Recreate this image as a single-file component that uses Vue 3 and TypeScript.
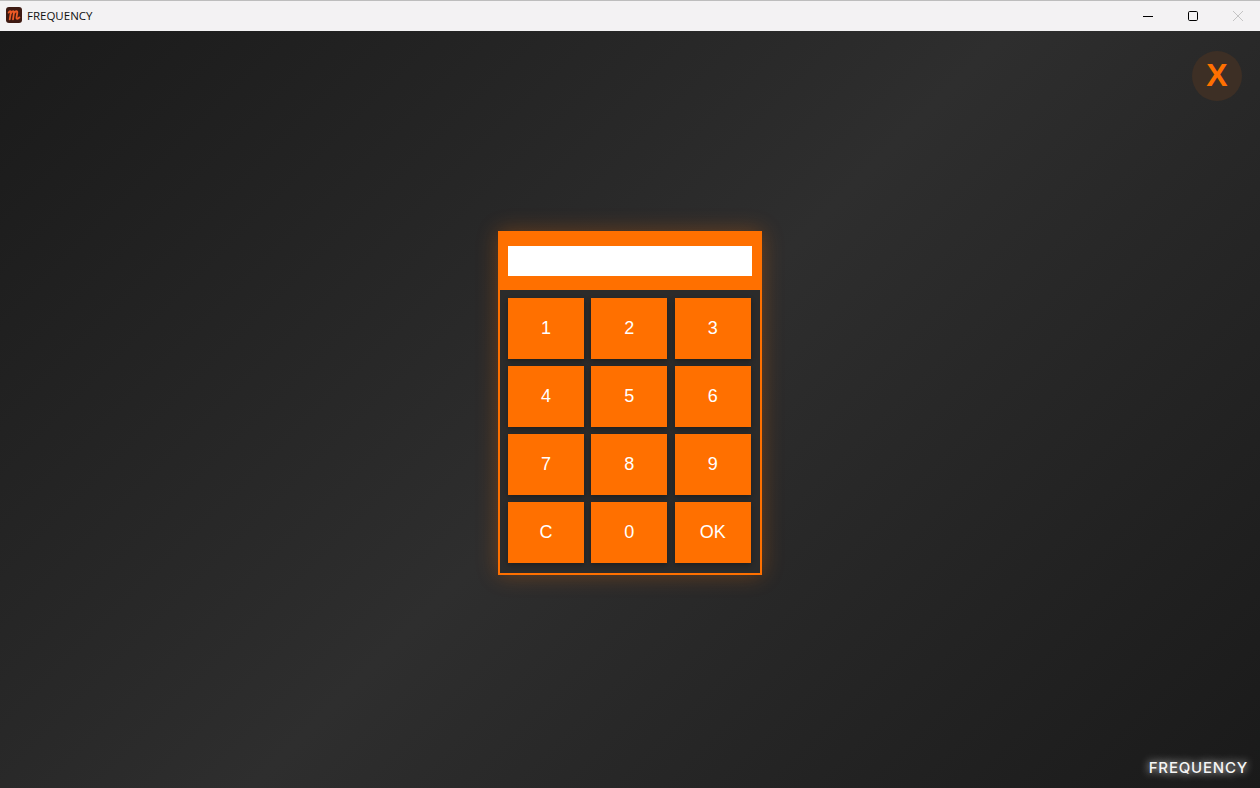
<script setup lang="ts">
const keys: string[] = ['1','2','3','4','5','6','7','8','9','C','0','OK']
</script>

<template>
  <div class="window">
    <header class="titlebar">
      <div class="app-title">
        <svg class="app-icon" width="16" height="16" viewBox="0 0 16 16">
          <rect x="0" y="0" width="16" height="16" rx="3" fill="#3d1a12" />
          <path d="M2.6 5.6C3.6 3.9 5 3.8 4.9 5.2L3.7 12.4M5.2 6C6.4 3.8 8.2 3.7 8 5.4L7 12.4M8.3 6C9.6 3.8 11.6 3.7 11.3 5.6L10.5 10.4C10.3 12.2 11.8 12.2 13.4 10.4" fill="none" stroke="#ee5a26" stroke-width="1.8" stroke-linecap="round" />
        </svg>
        <span>FREQUENCY</span>
      </div>
      <div class="controls">
        <button class="ctl" aria-label="Minimize"><svg width="10" height="10" viewBox="0 0 10 10"><path d="M0 5.5H10" stroke="#000" stroke-width="1" /></svg></button>
        <button class="ctl" aria-label="Maximize"><svg width="10" height="10" viewBox="0 0 10 10"><rect x="0.5" y="0.5" width="9" height="9" rx="1.2" fill="none" stroke="#000" stroke-width="1" /></svg></button>
        <button class="ctl" aria-label="Close"><svg width="10" height="10" viewBox="0 0 10 10"><path d="M0 0L10 10M10 0L0 10" stroke="#c4c4c4" stroke-width="1" /></svg></button>
      </div>
    </header>
    <main class="stage">
      <button class="exit">X</button>
      <section class="pad">
        <div class="pad-head"><input class="display" type="text" aria-label="Frequency" /></div>
        <div class="keys">
          <button v-for="k in keys" :key="k" class="key">{{ k }}</button>
        </div>
      </section>
      <div class="brand">FREQUENCY</div>
    </main>
  </div>
</template>

<style>
html, body { margin: 0; background: #1b1b1b; }
</style>

<style scoped>
.window {
  width: 1260px;
  height: 788px;
  display: flex;
  flex-direction: column;
  overflow: hidden;
  font-family: "Liberation Sans", Arial, sans-serif;
}
.titlebar {
  box-sizing: border-box;
  height: 31px;
  flex: none;
  display: flex;
  align-items: center;
  justify-content: space-between;
  background: #f3f2f3;
  border-top: 1px solid #bdbdbd;
}
.app-title {
  display: flex;
  align-items: center;
  gap: 5px;
  padding: 0 0 2px 6px;
  font: 11.5px "Open Sans", "Noto Sans", sans-serif;
  color: #111;
}
.app-icon { display: block; }
.controls { display: flex; }
.ctl {
  width: 45px;
  height: 30px;
  padding: 0;
  border: 0;
  background: transparent;
  display: flex;
  align-items: center;
  justify-content: center;
}
.stage {
  position: relative;
  flex: 1;
  box-sizing: border-box;
  padding-top: 200px;
  display: flex;
  justify-content: center;
  align-items: flex-start;
  background: linear-gradient(135deg, #1a1a1a 0%, #2e2e2e 50%, #1a1a1a 100%);
}
.exit {
  position: absolute;
  top: 20px;
  right: 18px;
  width: 50px;
  height: 50px;
  padding: 0 0 2px;
  border: 0;
  border-radius: 50%;
  background: #3d2f25;
  color: #ff7000;
  font: 700 32px "Liberation Sans", Arial, sans-serif;
}
.pad {
  box-sizing: border-box;
  width: 264px;
  height: 344px;
  border: 2px solid #ff7000;
  background: #2b2b2b;
  box-shadow: 0 0 20px rgba(255, 112, 0, 0.3);
}
.pad-head {
  box-sizing: border-box;
  height: 57px;
  padding: 13px 8px 0;
  background: #ff7000;
}
.display {
  box-sizing: border-box;
  display: block;
  width: 244px;
  height: 30px;
  padding: 0;
  border: 0;
  background: #fff;
}
.keys {
  display: grid;
  grid-template-columns: repeat(3, 76px);
  grid-auto-rows: 61px;
  column-gap: 7.33px;
  row-gap: 7px;
  padding: 8px 0 0 8px;
}
.key {
  padding: 0;
  border: 0;
  background: #ff7000;
  color: #fff;
  font: 18px "Liberation Sans", Arial, sans-serif;
  box-shadow: 0 2px 5px rgba(0, 0, 0, 0.3);
}
.brand {
  position: absolute;
  right: 12px;
  bottom: 11px;
  color: #f6f6f6;
  font: 500 15px "Inter", "DejaVu Sans", sans-serif;
  letter-spacing: 0.8px;
  text-shadow: 0 0 8px #fff;
}
</style>
